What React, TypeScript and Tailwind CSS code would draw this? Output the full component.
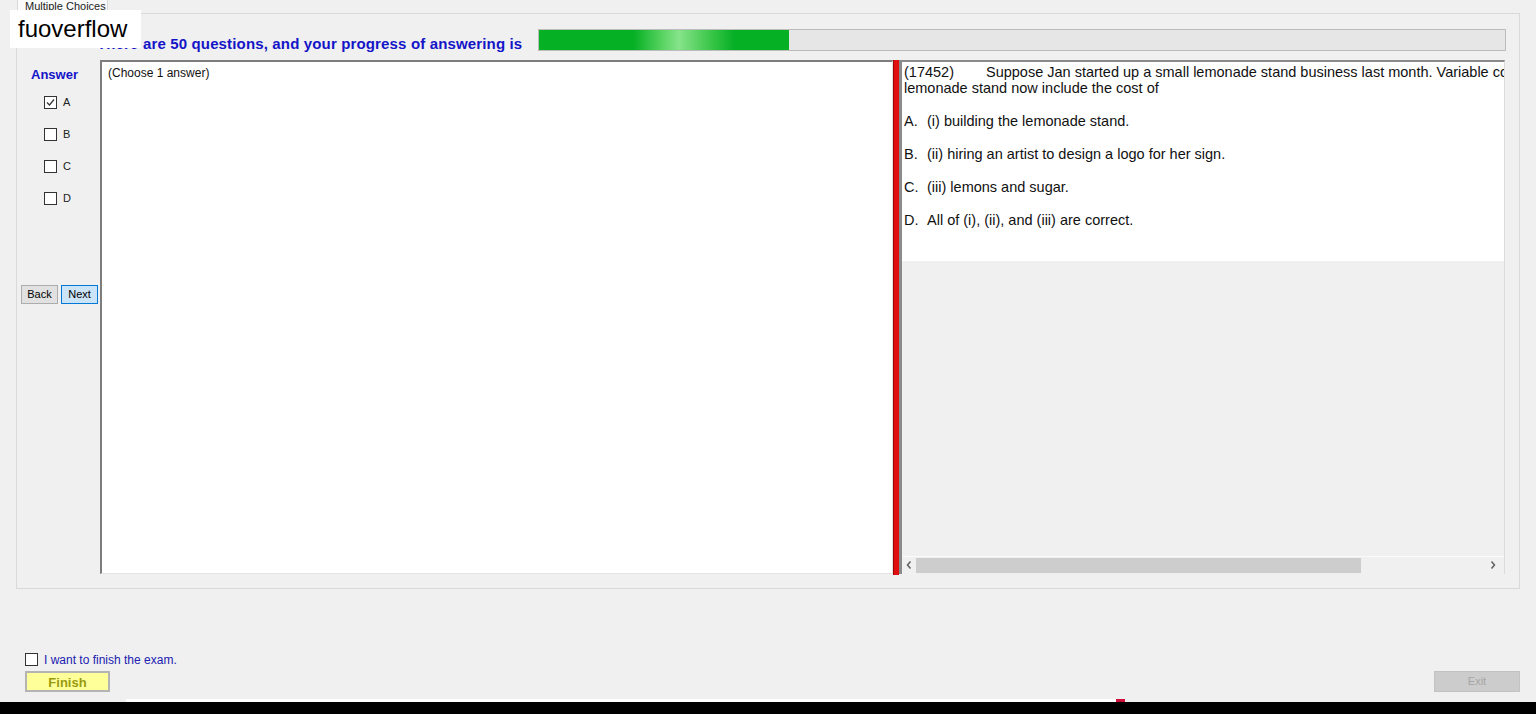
function Box({ checked = false }: { checked?: boolean }) {
  return (
    <div className="w-[13px] h-[13px] border border-[#333333] bg-white flex items-center justify-center shrink-0">
      {checked && (
        <svg width="9" height="9" viewBox="0 0 9 9">
          <path d="M1 4.5 L3.5 7 L8 1.5" fill="none" stroke="#333333" strokeWidth="1.2" />
        </svg>
      )}
    </div>
  );
}

const options = [
  { k: "A.", t: "(i) building the lemonade stand." },
  { k: "B.", t: "(ii) hiring an artist to design a logo for her sign." },
  { k: "C.", t: "(iii) lemons and sugar." },
  { k: "D.", t: "All of (i), (ii), and (iii) are correct." },
];

export default function App() {
  return (
    <div className="relative w-full h-[714px] bg-[#f0f0f0] flex flex-col overflow-hidden font-['Liberation_Sans',Arial,sans-serif] text-black">
      {/* tab strip */}
      <div className="h-[13px] pl-[17px] flex">
        <div className="w-[91px] h-[13px] bg-[#fafafa] border-x border-[#d9d9d9] pl-[7px] text-[11px] leading-[12px] text-[#222]">
          Multiple Choices
        </div>
      </div>

      {/* tab page */}
      <div className="ml-[16px] w-[1504px] h-[576px] border border-[#d9d9d9] bg-[#f0f0f0] flex flex-col">
        <div className="h-[46px] flex items-start pt-[15px]">
          <div className="w-[80px] shrink-0" />
          <div className="w-[441px] shrink-0 mt-[7px] text-[15px] leading-[16px] tracking-[0.15px] font-bold text-[#1414c8] whitespace-nowrap">
            There are 50 questions, and your progress of answering is
          </div>
          <div className="w-[968px] h-[22px] border border-[#bcbcbc] bg-[#e6e6e6] flex">
            <div className="w-[250px] h-full bg-[linear-gradient(90deg,#06b025_0%,#06b025_38%,#4fd05a_48%,#86e38a_56%,#3fc84c_68%,#06b025_78%,#06b025_100%)]" />
          </div>
        </div>

        <div className="h-[515px] flex">
          {/* answer column */}
          <div className="w-[83px] shrink-0 flex flex-col">
            <div className="pl-[14px] pt-[8px] text-[13px] leading-[14px] font-bold text-[#1414c8]">Answer</div>
            <div className="pl-[27px] mt-[14px] flex flex-col gap-[19px]">
              {["A", "B", "C", "D"].map((l, i) => (
                <div key={l} className="flex items-center gap-[6px] h-[13px]">
                  <Box checked={i === 0} />
                  <span className="text-[11px] leading-[13px] text-[#222]">{l}</span>
                </div>
              ))}
            </div>
            <div className="pl-[4px] mt-[80px] flex gap-[3px]">
              <div className="w-[37px] h-[19px] border border-[#adadad] bg-[#e1e1e1] text-[11px] leading-[17px] text-center">Back</div>
              <div className="w-[37px] h-[19px] border border-[#0078d7] bg-[#cce4f7] text-[11px] leading-[17px] text-center">Next</div>
            </div>
          </div>

          {/* answer text panel */}
          <div className="w-[793px] shrink-0 h-[514px] bg-white border-l-2 border-t-2 border-[#7d7d7d] border-r border-b border-r-[#e3e3e3] border-b-[#e3e3e3] pl-[6px] pt-[4px]">
            <div className="text-[12px] leading-[14px] text-[#111]">(Choose 1 answer)</div>
          </div>

          {/* splitter */}
          <div className="w-[6px] shrink-0 h-[515px] bg-[#e01010] border-l border-[#a00000]" />

          {/* question panel */}
          <div className="w-[606px] shrink-0 h-[514px] border-t-2 border-l-[3px] border-[#8a8a8a] border-r border-r-[#dcdcdc] flex flex-col bg-[#f0f0f0]">
            <div className="h-[199px] bg-white pl-[2px] pt-[2px] overflow-hidden text-[14.5px] leading-[16px] text-[#111]">
              <div className="whitespace-nowrap flex">
                <span className="mr-[32px]">(17452)</span>
                <span>Suppose Jan started up a small lemonade stand business last month. Variable costs for the</span>
              </div>
              <div className="whitespace-nowrap">lemonade stand now include the cost of</div>
              {options.map((o) => (
                <div key={o.k} className="whitespace-nowrap mt-[17px] flex">
                  <span className="w-[23px]">{o.k}</span>
                  <span>{o.t}</span>
                </div>
              ))}
            </div>
            <div className="flex-1" />
            <div className="h-[17px] mb-[1px] border-t border-[#fafafa] flex items-center bg-[#f0f0f0]">
              <div className="w-[14px] flex justify-center">
                <svg width="6" height="8" viewBox="0 0 6 8">
                  <path d="M4.5 0.5 L1.5 4 L4.5 7.5" fill="none" stroke="#606060" strokeWidth="1.5" />
                </svg>
              </div>
              <div className="w-[445px] h-[15px] bg-[#cdcdcd]" />
              <div className="flex-1" />
              <div className="w-[14px] flex justify-center mr-[4px]">
                <svg width="6" height="8" viewBox="0 0 6 8">
                  <path d="M1.5 0.5 L4.5 4 L1.5 7.5" fill="none" stroke="#606060" strokeWidth="1.5" />
                </svg>
              </div>
            </div>
          </div>
        </div>
      </div>

      {/* bottom area */}
      <div className="h-[63px]" />
      <div className="h-[14px] pl-[25px] flex items-center gap-[6px]">
        <Box />
        <span className="text-[12px] leading-[14px] pt-[2px] text-[#2020b0]">I want to finish the exam.</span>
      </div>
      <div className="h-[5px]" />
      <div className="h-[21px] pl-[25px] pr-[16px] flex items-start justify-between">
        <div className="w-[85px] h-[21px] border-2 border-[#b4b4b4] bg-[#ffff99] text-[13px] leading-[19px] font-bold text-[#9a9a10] text-center">
          Finish
        </div>
        <div className="w-[86px] h-[21px] border border-[#c2c2c2] bg-[#cccccc] text-[11px] leading-[19px] text-[#a6a6a6] text-center">
          Exit
        </div>
      </div>
      <div className="h-[7px]" />
      <div className="h-[3px] flex">
        <div className="ml-[126px] w-[990px] bg-white" />
        <div className="w-[9px] bg-[#d0103a]" />
      </div>
      <div className="h-[12px] bg-black" />

      {/* watermark */}
      <div className="absolute left-[10px] top-[10px] w-[131px] h-[38px] bg-white pl-[8px] text-[24px] leading-[38px] text-black">
        fuoverflow
      </div>
    </div>
  );
}
